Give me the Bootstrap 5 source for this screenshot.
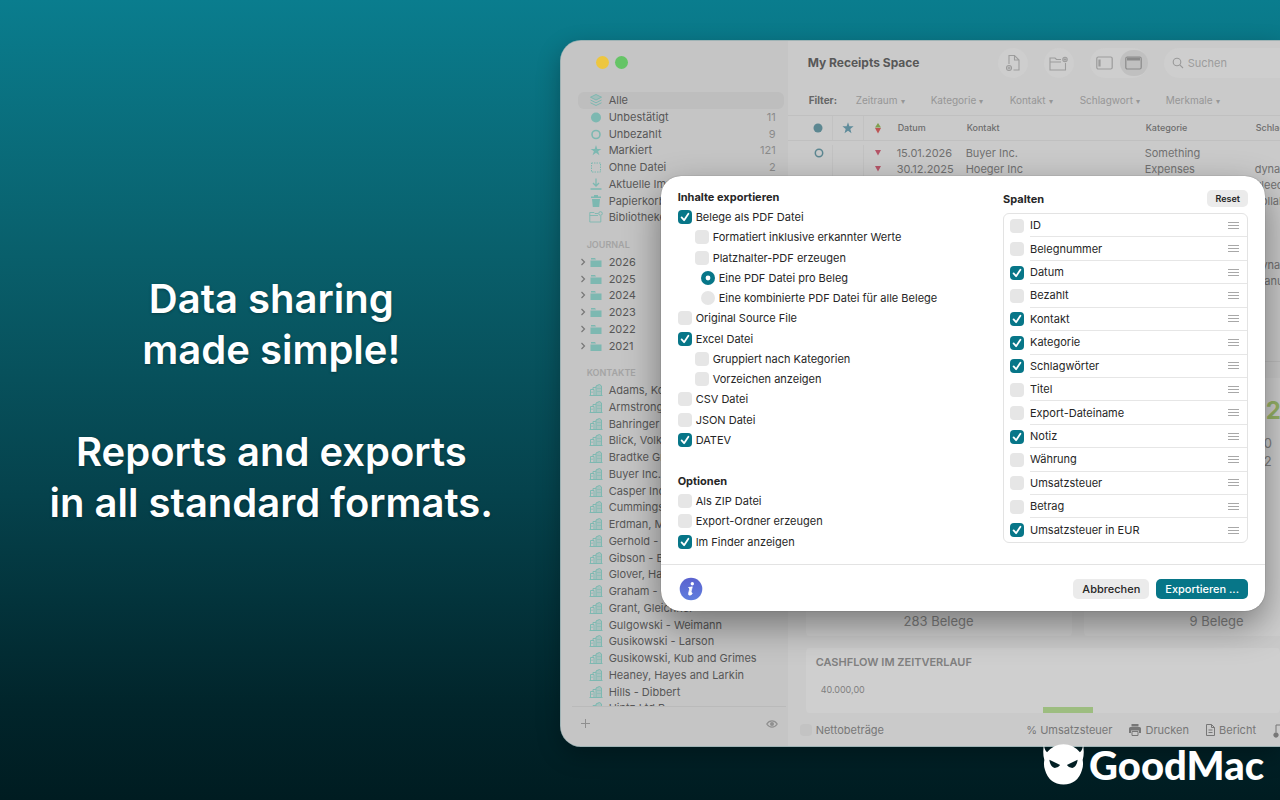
<!DOCTYPE html>
<html lang="de">
<head>
<meta charset="utf-8">
<meta name="viewport" content="width=device-width, initial-scale=1">
<title>My Receipts Space</title>
<link href="https://cdn.jsdelivr.net/npm/bootstrap@5.3.0/dist/css/bootstrap.min.css" rel="stylesheet">
<style>
:root{--teal:#077688;--ink:#262626}
body{font-family:Inter,"Liberation Sans",sans-serif;font-size:11px;line-height:16px;color:#575757;background:#001b20}
.stage{background:linear-gradient(#0a7d8e 0%,#095f6b 32%,#05424c 62%,#01252b 88%,#001c21 100%)}
.pitch{width:43.8%;padding-right:18px}
.pitch h1{font-size:40px;line-height:51px;font-weight:600;text-shadow:0 1px 3px rgba(0,0,0,.3)}
.appwin{margin:41px 0 54px;background:#cacaca;border-radius:20px 0 0 20px;box-shadow:0 0 0 1px #9fb3b5,0 8px 24px rgba(0,0,0,.3);min-width:0}
.clip{border-radius:20px 0 0 20px}
.side{width:227px;background:#c5c5c5;padding:0 4px 0 17px}
.lights{height:52px;padding:15px 0 0 18px}
.lights i{width:13px;height:13px;border-radius:50%}
.rows>*{flex:1 1 0;min-height:0}
.rows.n8{height:134px}.rows.n6{height:100px}.rows.n20{height:335px}
.src{padding:0 8px 0 11px;color:#575757;text-decoration:none;white-space:nowrap;border-radius:6px}
.src.tree{padding-left:0}
.src.sel{background:#bebebe}
.src svg{width:14px;height:14px;flex:none;color:#7db8b1;margin-right:6px}
.src svg.chev{width:11px;color:#777;margin:0}
.src .ms-auto{color:#8b8b8b}
.grp{height:28px;padding:11px 0 0 9px;font-size:9px;font-weight:600;color:#a4a4a4;line-height:16px}
.sfoot{height:40px;margin:0 -2px 0 -6px;border-top:1px solid #bababa;padding:0 8px 6px}
.ibtn{border:0;background:none;padding:0;color:#8f8f8f;line-height:0}
.tools{height:44px;padding-left:20px;color:#999}
.tools h2{font-size:12px;font-weight:700;color:#585858;width:190px;line-height:20px}
.tools .ibtn{color:#9c9c9c}
.pill{background:#cecece;border-radius:15px;height:30px}
.pill .ibtn{width:30px;height:30px;border-radius:15px}
.pill .on{background:#c0c0c0;width:28px;height:26px;color:#8a8a8a}
.find{width:130px;margin-right:-14px;padding-left:8px}
.find input{border:0;background:none;width:90px;padding:0;color:#999;font-size:11px}
.find input::placeholder{color:#9c9c9c}
.filters{height:31px;padding-left:21px;font-size:10px;color:#969696;border-bottom:1px solid #c0c0c0;white-space:nowrap}
.filters b{color:#666;width:47px}
.filters button{border:0;background:none;padding:0;color:inherit;text-align:left}
.filters button::after{content:"▾";font-size:8px;margin-left:3px}
.tblwrap{height:246px;border-bottom:1px solid #bebebe}
.grid{table-layout:fixed;width:494px;border-collapse:collapse;white-space:nowrap;color:#717171}
.grid th{height:24px;padding:0 0 0 5px;font-size:9px;font-weight:500;border-bottom:1px solid #c0c0c0;color:#6d6d6d}
.grid td{height:16px;padding:0 0 0 4px;line-height:16px}
.grid tbody::before{content:"";display:block;height:4px}
.grid .ic{text-align:center;padding:0;border-right:1px solid #c2c2c2;line-height:0}
.grid .ic:first-child{padding-left:16px}
.grid .ic:nth-child(3){border-right:0}
.below{padding:0 0 0 18px}
.stats{grid-template-columns:266px 266px;gap:12px;margin-top:16px}
.tile{background:#cfcfcf;border-radius:4px}
.tile .cnt{font-size:13px;line-height:18px;padding-bottom:6px;color:#808080}
.peek{padding-left:180px;padding-top:17px;font-size:13px;line-height:18px;color:#808080}
.peek strong{font-size:24px;line-height:32px;color:#97b367;padding-left:2px;margin-bottom:7px}
.flow{margin-top:12px;height:65px;padding:6px 10px 0;color:#808080}
.flow h3{font-size:11px;line-height:16px;font-weight:600;margin:0 0 12px}
.flow small{font-size:9px;padding-left:5px}
.bar{width:50px;height:6px;left:237px;bottom:0;background:#9dbd80}
.ffoot{height:33px;color:#777;white-space:nowrap}
.ffoot .ibtn{color:#777;line-height:16px;margin-right:17px}
.ffoot input{appearance:none;width:12px;height:12px;border-radius:4px;background:#c3c3c3;margin:0 4px 0 -6px}
.sheet{top:135px;left:100px;right:15px;background:#fff;border-radius:20px;color:var(--ink);box-shadow:0 0 1px rgba(0,0,0,.5),0 14px 36px rgba(0,0,0,.42)}
.sbody{padding:11px 17px 12px}
.ttl{font-size:11px;line-height:20px;font-weight:700;margin:0}
.rows.n12{height:243px}.rows.n3{height:61px}
.opt .form-check-input,.cols .form-check-input{width:14px;height:14px;margin:0 4px 0 0;border:0;background-color:#e6e6e6;flex:none;float:none;box-shadow:none}
.form-check-input[type=checkbox]{border-radius:4px}
.sheet .form-check-input:checked{background-color:var(--teal)}
.sheet .form-check-input:checked[type=checkbox]{background-image:url("data:image/svg+xml,%3Csvg xmlns='http://www.w3.org/2000/svg' viewBox='0 0 14 14'%3E%3Cpath fill='none' stroke='%23fff' stroke-width='1.8' stroke-linecap='round' stroke-linejoin='round' d='M3.6 7.4l2.5 2.8 4.3-6.4'/%3E%3C/svg%3E")}
.sheet .form-check-input:checked[type=radio]{background-image:url("data:image/svg+xml,%3Csvg xmlns='http://www.w3.org/2000/svg' viewBox='0 0 14 14'%3E%3Ccircle cx='7' cy='7' r='2.4' fill='%23fff'/%3E%3C/svg%3E")}
.l1{padding-left:17px}.l2{padding-left:23px}
.right{width:245px;padding-top:3px}
.gbtn{border:0;border-radius:5px;background:#ebebeb;color:var(--ink);font-size:11px;line-height:20px;padding:0 9px;font-weight:500}
.gbtn.mini{font-size:9px;line-height:17px;padding:0 8px;font-weight:600}
.gbtn.go{background:var(--teal);color:#fff}
.cols{height:330px;border:1px solid #e3e3e3;border-radius:6px;margin:6px 0 0;padding:0 0 0 6px;list-style:none}
.cols .form-check-input{margin-right:6px}
.cols li{display:flex;align-items:center}
.cols label{flex:1;align-self:stretch;display:flex;align-items:center;border-bottom:1px solid #e6e6e6}
.cols label::after{content:"";width:11px;height:7px;margin:0 8px 0 auto;background:linear-gradient(#a8a8a8 1px,#fff0 1px) 0 0/11px 3px}
.cols li:last-child label{border:0}
.sfooter{border-top:1px solid #e3e3e3;padding:12px 17px 10px 18px}
.sfooter .gap-btn{margin-right:7px}
.brandmark{right:16px;bottom:15px;color:#fff;gap:5px;font:900 40px/40px Lato,sans-serif}
</style>
</head>
<body>
<svg class="d-none" xmlns="http://www.w3.org/2000/svg">
<symbol id="city" viewBox="0 0 14 14"><path fill="currentColor" fill-opacity=".4" d="M7 2.500l3.500-1.500 2 1.500v10H7z"/><path d="M1.500 12.500V6.500H5v6M7 12.500V3l3.500-1.500 2 1.500v9.500M4 6.500V4.500h3M.5 12.500h13" fill="none" stroke="currentColor"/><path d="M3 8.500v1.500M9 5v1M11 5v1M9 8v1M11 8v1" fill="none" stroke="currentColor"/></symbol>
<symbol id="fold" viewBox="0 0 14 14"><path fill="currentColor" d="M2 3h4l1 1.500H2zM1.500 5.500h11v6.500h-11z"/></symbol>
<symbol id="chev" viewBox="0 0 11 14"><path d="M3.500 4l3 3-3 3" fill="none" stroke="currentColor" stroke-width="1.200"/></symbol>
</svg>
<main class="stage vh-100 d-flex overflow-hidden position-relative">
<section class="pitch d-flex align-items-center justify-content-center flex-shrink-0 text-center text-white">
<h1 class="m-0">Data sharing<br>made simple!<br><br>Reports and exports<br>in all standard formats.</h1>
</section>
<section class="appwin flex-grow-1 position-relative">
<div class="clip d-flex h-100 overflow-hidden">
<aside class="side d-flex flex-column flex-shrink-0">
<div class="lights d-flex gap-2"><i style="background:#edc63f;margin-right:-2px"></i><i style="background:#65c466"></i></div>
<nav class="rows n8 d-flex flex-column flex-shrink-0">
<a href="#" class="src sel d-flex align-items-center"><svg viewBox="0 0 14 14"><path d="M7 1.500l5.500 2.700L7 7 1.500 4.200z" fill="currentColor" fill-opacity=".4" stroke="currentColor"/><path d="M1.500 7L7 9.800 12.500 7M1.500 9.800L7 12.500l5.500-2.700" fill="none" stroke="currentColor"/></svg><span>Alle</span></a>
<a href="#" class="src d-flex align-items-center"><svg viewBox="0 0 14 14"><circle cx="7" cy="7.500" r="5" fill="currentColor"/></svg><span>Unbestätigt</span><span class="ms-auto">11</span></a>
<a href="#" class="src d-flex align-items-center"><svg viewBox="0 0 14 14"><circle cx="7" cy="7.500" r="4" fill="none" stroke="currentColor" stroke-width="1.600"/></svg><span>Unbezahlt</span><span class="ms-auto">9</span></a>
<a href="#" class="src d-flex align-items-center"><svg viewBox="0 0 14 14"><path fill="currentColor" d="M7 2l1.300 3.900h4.100L9.100 8.300l1.300 3.900L7 9.800l-3.400 2.400 1.300-3.900L1.600 5.900h4.100z"/></svg><span>Markiert</span><span class="ms-auto">121</span></a>
<a href="#" class="src d-flex align-items-center"><svg viewBox="0 0 14 14"><path d="M2.500 3h9v9h-9z" fill="none" stroke="currentColor" stroke-dasharray="1.500 1"/></svg><span>Ohne Datei</span><span class="ms-auto">2</span></a>
<a href="#" class="src d-flex align-items-center"><svg viewBox="0 0 14 14"><path d="M7 1.500v7M4 6l3 3 3-3M1.500 12h11" fill="none" stroke="currentColor" stroke-width="1.300"/></svg><span>Aktuelle Importe</span></a>
<a href="#" class="src d-flex align-items-center"><svg viewBox="0 0 14 14"><path fill="currentColor" d="M5 1h4v1.500h3V4H2V2.500h3zM3 5h8l-.8 8H3.800z"/></svg><span>Papierkorb</span></a>
<a href="#" class="src d-flex align-items-center"><svg viewBox="0 0 14 14"><path d="M9 3.500H6L5 2.500H.8v9.500h11V6M.8 5.500H9" fill="none" stroke="currentColor" stroke-width=".9"/><circle cx="11.500" cy="3.500" r="1.800" fill="none" stroke="currentColor"/></svg><span>Bibliotheken</span></a>
</nav>
<div class="grp flex-shrink-0">JOURNAL</div>
<nav class="rows n6 d-flex flex-column flex-shrink-0">
<a href="#" class="src tree d-flex align-items-center"><svg class="chev"><use href="#chev"/></svg><svg><use href="#fold"/></svg>2026</a>
<a href="#" class="src tree d-flex align-items-center"><svg class="chev"><use href="#chev"/></svg><svg><use href="#fold"/></svg>2025</a>
<a href="#" class="src tree d-flex align-items-center"><svg class="chev"><use href="#chev"/></svg><svg><use href="#fold"/></svg>2024</a>
<a href="#" class="src tree d-flex align-items-center"><svg class="chev"><use href="#chev"/></svg><svg><use href="#fold"/></svg>2023</a>
<a href="#" class="src tree d-flex align-items-center"><svg class="chev"><use href="#chev"/></svg><svg><use href="#fold"/></svg>2022</a>
<a href="#" class="src tree d-flex align-items-center"><svg class="chev"><use href="#chev"/></svg><svg><use href="#fold"/></svg>2021</a>
</nav>
<div class="grp flex-shrink-0">KONTAKTE</div>
<div class="flex-grow-1 overflow-hidden" style="min-height:0">
<nav class="rows n20 d-flex flex-column">
<a href="#" class="src d-flex align-items-center"><svg><use href="#city"/></svg>Adams, Koch</a>
<a href="#" class="src d-flex align-items-center"><svg><use href="#city"/></svg>Armstrong</a>
<a href="#" class="src d-flex align-items-center"><svg><use href="#city"/></svg>Bahringer</a>
<a href="#" class="src d-flex align-items-center"><svg><use href="#city"/></svg>Blick, Volkman</a>
<a href="#" class="src d-flex align-items-center"><svg><use href="#city"/></svg>Bradtke Group</a>
<a href="#" class="src d-flex align-items-center"><svg><use href="#city"/></svg>Buyer Inc.</a>
<a href="#" class="src d-flex align-items-center"><svg><use href="#city"/></svg>Casper Inc</a>
<a href="#" class="src d-flex align-items-center"><svg><use href="#city"/></svg>Cummings</a>
<a href="#" class="src d-flex align-items-center"><svg><use href="#city"/></svg>Erdman, Mills</a>
<a href="#" class="src d-flex align-items-center"><svg><use href="#city"/></svg>Gerhold - Bins</a>
<a href="#" class="src d-flex align-items-center"><svg><use href="#city"/></svg>Gibson - Beier</a>
<a href="#" class="src d-flex align-items-center"><svg><use href="#city"/></svg>Glover, Hansen</a>
<a href="#" class="src d-flex align-items-center"><svg><use href="#city"/></svg>Graham - Lind</a>
<a href="#" class="src d-flex align-items-center"><svg><use href="#city"/></svg>Grant, Gleichner</a>
<a href="#" class="src d-flex align-items-center"><svg><use href="#city"/></svg>Gulgowski - Weimann</a>
<a href="#" class="src d-flex align-items-center"><svg><use href="#city"/></svg>Gusikowski - Larson</a>
<a href="#" class="src d-flex align-items-center"><svg><use href="#city"/></svg>Gusikowski, Kub and Grimes</a>
<a href="#" class="src d-flex align-items-center"><svg><use href="#city"/></svg>Heaney, Hayes and Larkin</a>
<a href="#" class="src d-flex align-items-center"><svg><use href="#city"/></svg>Hills - Dibbert</a>
<a href="#" class="src d-flex align-items-center"><svg><use href="#city"/></svg>Hintz Ltd B</a>
</nav></div>
<div class="sfoot d-flex align-items-center justify-content-between flex-shrink-0">
<button class="ibtn" aria-label="Hinzufügen"><svg width="11" height="11" viewBox="0 0 11 11"><path d="M5.500 1v9M1 5.500h9" stroke="currentColor"/></svg></button>
<button class="ibtn" aria-label="Anzeigen"><svg width="12" height="10" viewBox="0 0 12 10"><path d="M.8 5C3.500.8 8.500.8 11.200 5 8.500 9.200 3.500 9.200.8 5z" fill="none" stroke="currentColor" stroke-width="1.300"/><circle cx="6" cy="5" r="2" fill="currentColor"/></svg></button>
</div>
</aside>
<div class="flex-grow-1 d-flex flex-column overflow-hidden" style="min-width:0">
<header class="tools d-flex align-items-center flex-shrink-0">
<h2 class="m-0 flex-shrink-0">My Receipts Space</h2>
<div class="pill flex-shrink-0"><button class="ibtn" aria-label="Neuer Beleg"><svg width="16" height="18" viewBox="0 0 16 18" fill="none" stroke="currentColor" stroke-width="1.100"><path d="M4 10V1.500h5.500L14 6v10H8.500M9.500 1.500V6H14"/><circle cx="4" cy="14" r="2.500"/><path d="M2.500 14h3M4 12.500v3"/></svg></button></div>
<div class="pill flex-shrink-0 ms-3"><button class="ibtn" aria-label="Neuer Ordner"><svg width="19" height="15" viewBox="0 0 19 15" fill="none" stroke="currentColor" stroke-width="1.100"><path d="M12 3.500H7.500L6 2H1v12h15.500V7M1 6h11"/><circle cx="16" cy="3.500" r="2.200"/><path d="M14.500 3.500h3M16 2v3"/></svg></button></div>
<div class="pill flex-shrink-0 ms-3 d-flex align-items-center"><button class="ibtn" aria-label="Seitenleiste"><svg width="17" height="14" viewBox="0 0 17 14" fill="none" stroke="currentColor" stroke-width="1.200"><rect x=".8" y="1" width="15.400" height="12" rx="1.500"/><path d="M3.500 3.500v7" stroke-width="2.200"/></svg></button><button class="ibtn on" aria-label="Kopfbereich"><svg width="17" height="14" viewBox="0 0 17 14" fill="none" stroke="currentColor" stroke-width="1.200"><rect x=".8" y="1" width="15.400" height="12" rx="1.500"/><path d="M2 3h13" stroke-width="3"/></svg></button></div>
<label class="pill find ms-3 d-flex align-items-center gap-1 flex-shrink-0"><svg width="12" height="12" viewBox="0 0 12 12" fill="none" stroke="currentColor" stroke-width="1.100"><circle cx="5" cy="5" r="3.800"/><path d="M7.800 7.800L11 11"/></svg><input type="search" placeholder="Suchen" aria-label="Suchen"></label>
</header>
<div class="filters d-flex align-items-center flex-shrink-0"><b>Filter:</b><button style="width:75px">Zeitraum</button><button style="width:79px">Kategorie</button><button style="width:70px">Kontakt</button><button style="width:86px">Schlagwort</button><button>Merkmale</button></div>
<div class="tblwrap overflow-hidden flex-shrink-0">
<table class="grid">
<colgroup><col style="width:45px"><col style="width:31px"><col style="width:29px"><col style="width:69px"><col style="width:179px"><col style="width:110px"><col></colgroup>
<thead><tr>
<th class="ic"><svg width="10" height="10"><circle cx="5" cy="5" r="4.500" fill="#5c8791"/></svg></th>
<th class="ic"><svg width="12" height="12" viewBox="0 0 12 12"><path fill="#5f8c9b" d="M6 .3l1.400 4h4.200L8.300 6.900l1.200 4.300L6 8.800l-3.500 2.400 1.200-4.300L.4 4.300h4.200z"/></svg></th>
<th class="ic"><svg width="8" height="12" viewBox="0 0 8 12"><path fill="#7f9f50" d="M4 1l3 4.500H1z"/><path fill="#bd5555" d="M4 11.500L1 6h6z"/></svg></th>
<th>Datum</th><th>Kontakt</th><th>Kategorie</th><th>Schlagwörter</th></tr></thead>
<tbody>
<tr><td class="ic"><svg width="12" height="10"><circle cx="7" cy="5" r="3.700" fill="none" stroke="#5c8791" stroke-width="1.500"/></svg></td><td class="ic"></td><td class="ic"><svg width="8" height="6"><path fill="#b55568" d="M1 0h6L4 5.500z"/></svg></td><td>15.01.2026</td><td>Buyer Inc.</td><td>Something</td><td></td></tr>
<tr><td class="ic"></td><td class="ic"></td><td class="ic"><svg width="8" height="6"><path fill="#b55568" d="M1 0h6L4 5.500z"/></svg></td><td>30.12.2025</td><td>Hoeger Inc</td><td>Expenses</td><td>dynamic</td></tr>
<tr><td colspan="6"></td><td>gleeco</td></tr>
<tr><td colspan="6"></td><td>collaborate</td></tr>
<tr><td colspan="7"></td></tr><tr><td colspan="7"></td></tr><tr><td colspan="7"></td></tr>
<tr><td colspan="6"></td><td>dynamic</td></tr>
<tr><td colspan="6"></td><td>manual</td></tr>
</tbody></table></div>
<div class="below d-flex flex-column flex-grow-1">
<div class="stats d-grid flex-grow-1">
<div class="tile d-flex flex-column"><div class="cnt mt-auto text-center">283 Belege</div></div>
<div class="tile d-flex flex-column"><div class="peek d-flex flex-column"><strong>2</strong><span>0</span><span>2</span></div><div class="cnt mt-auto text-center">9 Belege</div></div>
</div>
<div class="tile flow position-relative flex-shrink-0"><h3>CASHFLOW IM ZEITVERLAUF</h3><small class="d-block">40.000,00</small><div class="bar position-absolute"></div></div>
<div class="ffoot d-flex align-items-center flex-shrink-0"><input type="checkbox" id="net"><label for="net" class="me-auto">Nettobeträge</label>
<button class="ibtn">% Umsatzsteuer</button>
<button class="ibtn d-flex align-items-center"><svg class="me-1" width="12" height="12" viewBox="0 0 12 12"><path fill="currentColor" d="M2.500 0h7v2.500h-7zM1.500 3h9Q12 3 12 4.500V9h-2V6.500H2V9H0V4.500Q0 3 1.500 3z"/><path d="M3 7.500h6v4H3z" fill="none" stroke="currentColor"/></svg>Drucken</button>
<button class="ibtn d-flex align-items-center"><svg class="me-1" width="9" height="12" viewBox="0 0 9 12" fill="none" stroke="currentColor"><path d="M.5.5H5.500l3 3v8h-8zM5.500.5v3h3M2.500 6h4M2.500 8.500h4"/></svg>Bericht</button>
<button class="ibtn" style="margin-right:-7px" aria-label="Export"><svg width="14" height="14" viewBox="0 0 14 14" fill="none" stroke="currentColor"><path d="M3 8V1h6l3 3v9H7"/><circle cx="3" cy="11" r="2.200" fill="currentColor"/></svg></button>
</div></div></div></div>

<form class="sheet position-absolute" role="dialog" aria-label="Export">
<div class="sbody d-flex justify-content-between">
<div class="opt">
<h2 class="ttl">Inhalte exportieren</h2>
<div class="rows n12 d-flex flex-column">
<label class="d-flex align-items-center"><input class="form-check-input" type="checkbox" checked>Belege als PDF Datei</label>
<label class="l1 d-flex align-items-center"><input class="form-check-input" type="checkbox">Formatiert inklusive erkannter Werte</label>
<label class="l1 d-flex align-items-center"><input class="form-check-input" type="checkbox">Platzhalter-PDF erzeugen</label>
<label class="l2 d-flex align-items-center"><input class="form-check-input" type="radio" name="pdf" checked>Eine PDF Datei pro Beleg</label>
<label class="l2 d-flex align-items-center"><input class="form-check-input" type="radio" name="pdf">Eine kombinierte PDF Datei für alle Belege</label>
<label class="d-flex align-items-center"><input class="form-check-input" type="checkbox">Original Source File</label>
<label class="d-flex align-items-center"><input class="form-check-input" type="checkbox" checked>Excel Datei</label>
<label class="l1 d-flex align-items-center"><input class="form-check-input" type="checkbox">Gruppiert nach Kategorien</label>
<label class="l1 d-flex align-items-center"><input class="form-check-input" type="checkbox">Vorzeichen anzeigen</label>
<label class="d-flex align-items-center"><input class="form-check-input" type="checkbox">CSV Datei</label>
<label class="d-flex align-items-center"><input class="form-check-input" type="checkbox">JSON Datei</label>
<label class="d-flex align-items-center"><input class="form-check-input" type="checkbox" checked>DATEV</label>
</div>
<h2 class="ttl" style="margin-top:21px">Optionen</h2>
<div class="rows n3 d-flex flex-column">
<label class="d-flex align-items-center"><input class="form-check-input" type="checkbox">Als ZIP Datei</label>
<label class="d-flex align-items-center"><input class="form-check-input" type="checkbox">Export-Ordner erzeugen</label>
<label class="d-flex align-items-center"><input class="form-check-input" type="checkbox" checked>Im Finder anzeigen</label>
</div>
</div>
<div class="right">
<div class="d-flex align-items-center justify-content-between" style="height:17px"><h2 class="ttl">Spalten</h2><button type="button" class="gbtn mini">Reset</button></div>
<ul class="cols rows d-flex flex-column">
<li><input class="form-check-input" type="checkbox" id="c1"><label for="c1">ID</label></li>
<li><input class="form-check-input" type="checkbox" id="c2"><label for="c2">Belegnummer</label></li>
<li><input class="form-check-input" type="checkbox" id="c3" checked><label for="c3">Datum</label></li>
<li><input class="form-check-input" type="checkbox" id="c4"><label for="c4">Bezahlt</label></li>
<li><input class="form-check-input" type="checkbox" id="c5" checked><label for="c5">Kontakt</label></li>
<li><input class="form-check-input" type="checkbox" id="c6" checked><label for="c6">Kategorie</label></li>
<li><input class="form-check-input" type="checkbox" id="c7" checked><label for="c7">Schlagwörter</label></li>
<li><input class="form-check-input" type="checkbox" id="c8"><label for="c8">Titel</label></li>
<li><input class="form-check-input" type="checkbox" id="c9"><label for="c9">Export-Dateiname</label></li>
<li><input class="form-check-input" type="checkbox" id="c10" checked><label for="c10">Notiz</label></li>
<li><input class="form-check-input" type="checkbox" id="c11"><label for="c11">Währung</label></li>
<li><input class="form-check-input" type="checkbox" id="c12"><label for="c12">Umsatzsteuer</label></li>
<li><input class="form-check-input" type="checkbox" id="c13"><label for="c13">Betrag</label></li>
<li><input class="form-check-input" type="checkbox" id="c14" checked><label for="c14">Umsatzsteuer in EUR</label></li>
</ul>
</div>
</div>
<div class="sfooter d-flex align-items-center">
<button type="button" class="ibtn me-auto" aria-label="Info"><svg width="24" height="24" viewBox="0 0 24 24"><defs><linearGradient id="ig" x2="0" y2="1"><stop stop-color="#5b62cf"/><stop offset="1" stop-color="#5f7edd"/></linearGradient></defs><circle cx="12" cy="12" r="11.300" fill="url(#ig)"/><circle cx="13.300" cy="6.700" r="1.700" fill="#fff"/><path d="M9.500 10.500l3.800-.7-1.800 7q-.2 1 .6.600l1.200-1M9.500 10.500l1.500.3-1.500 5.700q-.3 1.800 1.400 1.700 1.500-.1 2.400-1.900" fill="#fff" stroke="#fff" stroke-width=".7"/></svg></button>
<button type="button" class="gbtn gap-btn">Abbrechen</button><button type="button" class="gbtn go">Exportieren ...</button>
</div>
</form>
</section>
<div class="brandmark position-absolute d-flex align-items-end">
<svg width="41" height="42" viewBox="0 0 122 124"><path fill="#fff" d="M3 3Q3 18 12 27Q32 3 61 3Q90 3 110 27Q119 18 119 3Q124 30 118 50Q121 66 116 80Q104 122 61 123Q18 122 6 80Q1 66 4 50Q-2 30 3 3z"/><path fill="#021f24" d="M19 49L51 65Q45 74 35 74Q21 70 19 49zM103 49L71 65Q77 74 87 74Q101 70 103 49z"/></svg><span>GoodMac</span></div>
</main>
<script src="https://cdn.jsdelivr.net/npm/bootstrap@5.3.0/dist/js/bootstrap.bundle.min.js"></script>
</body>
</html>
